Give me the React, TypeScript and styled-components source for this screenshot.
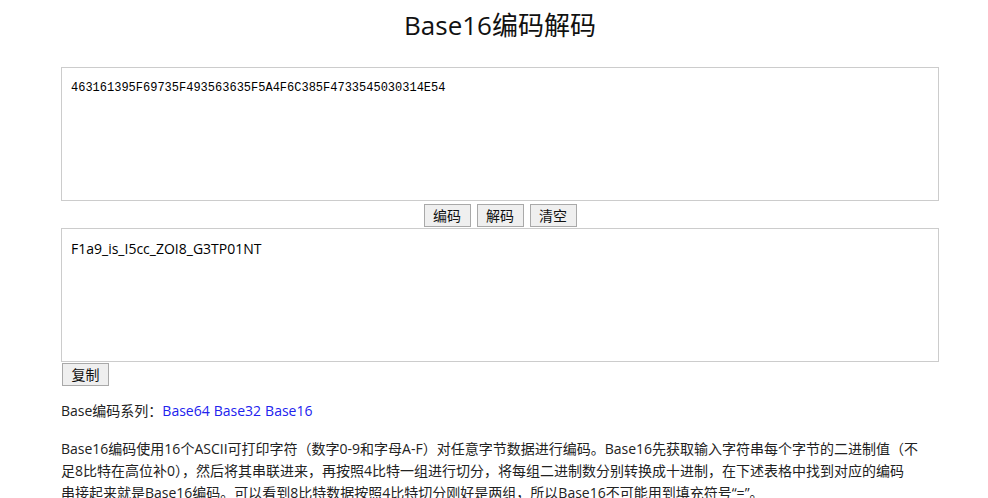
import React from "react";
import styled, { createGlobalStyle } from "styled-components";

const sans = `"Open Sans", "Noto Sans CJK SC", sans-serif`;

const Global = createGlobalStyle`
  html, body { margin: 0; padding: 0; background: #fff; overflow-x: hidden; }
  body { font-family: ${sans}; color: #222; }
`;

const Page = styled.div`
  width: 1000px;
`;

const Title = styled.h1`
  margin: 5px 0 22px;
  font-size: 26px;
  line-height: 40px;
  font-weight: 400;
  text-align: center;
  color: #111;
`;

const Main = styled.main`
  width: 878px;
  margin: 0 auto;
`;

const Area = styled.textarea<{ $mono?: boolean }>`
  display: block;
  box-sizing: border-box;
  width: 100%;
  height: 134px;
  margin: 0;
  padding: 10px 9px;
  border: 1px solid #ccc;
  resize: none;
  overflow: hidden;
  outline: none;
  color: #000;
  background: #fff;
  font-family: ${(p) => (p.$mono ? '"Liberation Mono", monospace' : sans)};
  font-size: ${(p) => (p.$mono ? "12px" : "14px")};
  line-height: 20px;
`;

const ButtonRow = styled.div<{ $align: "center" | "left" }>`
  display: flex;
  justify-content: ${(p) => (p.$align === "center" ? "center" : "flex-start")};
  gap: 6px;
  padding: ${(p) => (p.$align === "center" ? "3px 0 1px" : "1px 0 0 1px")};
`;

const Btn = styled.button`
  box-sizing: border-box;
  height: 23px;
  padding: 0 8px;
  min-width: 47px;
  border: 1px solid #a9a9a9;
  background: #efefef;
  color: #111;
  font-family: ${sans};
  font-size: 14px;
  line-height: 21px;
  cursor: pointer;
`;

const Series = styled.div`
  margin-top: 14px;
  font-size: 14px;
  line-height: 22px;
`;

const Link = styled.a`
  color: #2222ee;
  text-decoration: none;
  margin-right: 4px;
`;

const Para = styled.p`
  margin: 16px 0 0;
  font-size: 14px;
  line-height: 22px;
`;

export default function App() {
  return (
    <Page>
      <Global />
      <Title>Base16编码解码</Title>
      <Main>
        <Area $mono readOnly defaultValue="463161395F69735F493563635F5A4F6C385F4733545030314E54" />
        <ButtonRow $align="center">
          <Btn>编码</Btn>
          <Btn>解码</Btn>
          <Btn>清空</Btn>
        </ButtonRow>
        <Area readOnly defaultValue="F1a9_is_I5cc_ZOI8_G3TP01NT" />
        <ButtonRow $align="left">
          <Btn>复制</Btn>
        </ButtonRow>
        <Series>
          Base编码系列：<Link href="#">Base64</Link>
          <Link href="#">Base32</Link>
          <Link href="#">Base16</Link>
        </Series>
        <Para>
          Base16编码使用16个ASCII可打印字符（数字0-9和字母A-F）对任意字节数据进行编码。Base16先获取输入字符串每个字节的二进制值（不
          <br />
          足8比特在高位补0），然后将其串联进来，再按照4比特一组进行切分，将每组二进制数分别转换成十进制，在下述表格中找到对应的编码
          <br />
          串接起来就是Base16编码。可以看到8比特数据按照4比特切分刚好是两组，所以Base16不可能用到填充符号“=”。
        </Para>
      </Main>
    </Page>
  );
}
